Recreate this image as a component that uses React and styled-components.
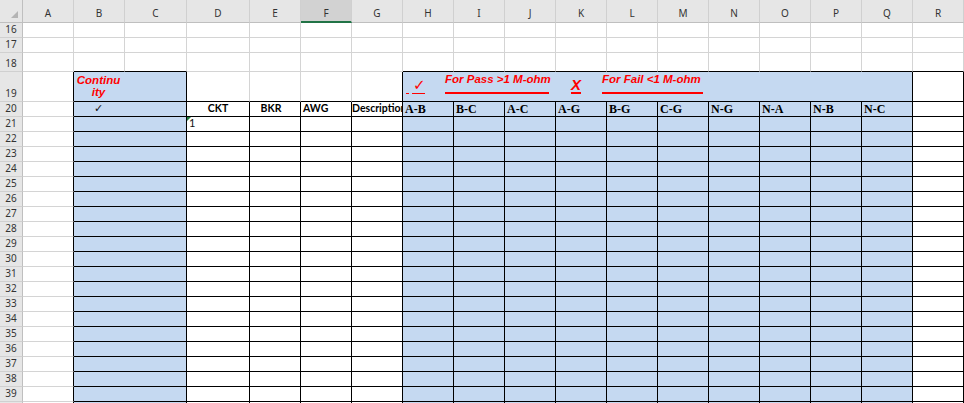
import styled, { createGlobalStyle } from 'styled-components';

const GRID = '#d4d4d4';
const INK = '#000';
const BLUE = '#c5d9f1';
const RED = '#ff0000';
const HEAD_BG = '#e6e6e6';

const COLS = ['A', 'B', 'C', 'D', 'E', 'F', 'G', 'H', 'I', 'J', 'K', 'L', 'M', 'N', 'O', 'P', 'Q', 'R'];
const COL_WIDTHS = [51, 51, 62, 63, 51, 51, 51, 51, 51, 51, 51, 51, 51, 51, 51, 51, 51, 51];
const ROWS = Array.from({ length: 25 }, (_, i) => i + 16);
const LAST_VISIBLE_ROW = 39;
const ROW_HEIGHTS = { 18: 19, 19: 30 };
const PAIRS = ['A-B', 'B-C', 'A-C', 'A-G', 'B-G', 'C-G', 'N-G', 'N-A', 'N-B', 'N-C'];
const ACTIVE_COL = 'F';

const GlobalStyle = createGlobalStyle`
  html, body {
    margin: 0;
    padding: 0;
    background: #fff;
    overflow: hidden;
  }
  * { box-sizing: border-box; }
`;

function isBoxed(row, col) {
  if (row < 19 || col > 17) return false;
  if (col >= 3 && col <= 6) return row >= 20;
  return col >= 1;
}

function isBlue(row, col) {
  return row >= 19 && ((col >= 1 && col <= 2) || (col >= 7 && col <= 16));
}

function rowCells(row) {
  const cells = [];
  let col = 0;
  while (col < COLS.length) {
    let span = 1;
    if (row >= 19 && col === 1) span = 2;
    if (row === 19 && col === 7) span = 10;
    cells.push({ col, span });
    col += span;
  }
  return cells;
}

function cellContent(row, col) {
  if (row === 19 && col === 1) return <Continuity>Continuity</Continuity>;
  if (row === 19 && col === 7) return <LegendRow />;
  if (row === 20) {
    if (col === 1) return <Tick>✓</Tick>;
    if (col === 3) return <HeadLabel $justify="center">CKT</HeadLabel>;
    if (col === 4) return <HeadLabel $justify="center" $pr={8}>BKR</HeadLabel>;
    if (col === 5) return <HeadLabel $pl={2}>AWG</HeadLabel>;
    if (col === 6) return <HeadLabel $justify="center">Description</HeadLabel>;
    if (col >= 7 && col <= 16) return <PairLabel>{PAIRS[col - 7]}</PairLabel>;
  }
  if (row === 21 && col === 3) {
    return (
      <>
        <ErrorMark />
        <NumberText>1</NumberText>
      </>
    );
  }
  return null;
}

function LegendRow() {
  return (
    <Legend>
      <Dash />
      <CheckUnder>✓</CheckUnder>
      <LegendNote $ml={20} $w={104}>For Pass &gt;1 M-ohm</LegendNote>
      <FailMark>X</FailMark>
      <LegendNote $ml={21} $w={101}>For Fail &lt;1 M-ohm</LegendNote>
    </Legend>
  );
}

export default function App() {
  return (
    <>
      <GlobalStyle />
      <Sheet>
        <Corner><CornerArrow /></Corner>
        {COLS.map((c) => (
          <ColHead key={c} $active={c === ACTIVE_COL}>{c}</ColHead>
        ))}
        {ROWS.map((row) => (
          <Row key={row} row={row} />
        ))}
      </Sheet>
    </>
  );
}

function Row({ row }) {
  return (
    <>
      <RowHead>{row <= LAST_VISIBLE_ROW ? row : ''}</RowHead>
      {rowCells(row).map(({ col, span }) => {
        const boxed = isBoxed(row, col);
        const right = boxed || isBoxed(row, col + span) ? INK : GRID;
        const bottom = boxed || isBoxed(row + 1, col) ? INK : GRID;
        return (
          <Cell
            key={col}
            $span={span}
            $blue={isBlue(row, col)}
            $right={right}
            $bottom={bottom}
            $top={row === 19 && col === 1}
          >
            {cellContent(row, col)}
          </Cell>
        );
      })}
    </>
  );
}

const Sheet = styled.div`
  display: grid;
  grid-template-columns: 23px ${COL_WIDTHS.map((w) => `${w}px`).join(' ')};
  grid-template-rows: 23px ${ROWS.map((r) => `${ROW_HEIGHTS[r] || 15}px`).join(' ')};
  width: 964px;
  height: 403px;
  overflow: hidden;
  background: #fff;
`;

const Corner = styled.div`
  display: flex;
  align-items: flex-end;
  justify-content: flex-end;
  padding: 0 4px 4px 0;
  background: ${HEAD_BG};
  border-right: 1px solid #bfbfbf;
  border-bottom: 1px solid #bfbfbf;
`;

const CornerArrow = styled.div`
  width: 0;
  height: 0;
  border-left: 7px solid transparent;
  border-bottom: 7px solid #b4b4b4;
`;

const ColHead = styled.div`
  display: flex;
  align-items: flex-end;
  justify-content: center;
  padding-bottom: ${(p) => (p.$active ? 2 : 3)}px;
  background: ${(p) => (p.$active ? '#d2d2d2' : HEAD_BG)};
  border-right: 1px solid #d0d0d0;
  border-bottom: ${(p) => (p.$active ? '2px solid #217346' : '1px solid #bfbfbf')};
  font: 10px/12px 'Noto Sans', 'DejaVu Sans', sans-serif;
  color: #333;
`;

const RowHead = styled.div`
  display: flex;
  align-items: flex-end;
  justify-content: center;
  padding-bottom: 2px;
  background: ${HEAD_BG};
  border-right: 1px solid #bfbfbf;
  border-bottom: 1px solid #d0d0d0;
  font: 10px/12px 'Noto Sans', 'DejaVu Sans', sans-serif;
  color: #333;
  overflow: hidden;
`;

const Cell = styled.div`
  grid-column: span ${(p) => p.$span};
  position: relative;
  display: flex;
  align-items: ${(p) => (p.$top ? 'flex-start' : 'flex-end')};
  min-width: 0;
  overflow: hidden;
  background: ${(p) => (p.$blue ? BLUE : '#fff')};
  border-right: 1px solid ${(p) => p.$right};
  border-bottom: 1px solid ${(p) => p.$bottom};
`;

const Continuity = styled.div`
  width: 45px;
  margin: 2px 0 0 2px;
  text-align: center;
  word-break: break-all;
  font: italic bold 11.5px/12px 'Liberation Sans', Arial, sans-serif;
  color: ${RED};
`;

const Tick = styled.div`
  width: 49px;
  text-align: center;
  padding-bottom: 1px;
  font: 11px/12px 'DejaVu Sans', sans-serif;
  color: #111;
`;

const HeadLabel = styled.div`
  flex: 1;
  display: flex;
  justify-content: ${(p) => p.$justify || 'flex-start'};
  padding: 0 ${(p) => p.$pr || 0}px 2px ${(p) => p.$pl || 0}px;
  white-space: nowrap;
  font: bold 10.5px/12px Lato, 'Liberation Sans', sans-serif;
  color: #000;
`;

const PairLabel = styled.div`
  padding: 0 0 1px 2px;
  white-space: nowrap;
  font: bold 12px/12px 'Liberation Serif', 'Times New Roman', serif;
  color: #000;
`;

const NumberText = styled.div`
  padding: 0 0 2px 2px;
  font: 11px/12px Lato, 'Liberation Sans', sans-serif;
  color: #111;
`;

const ErrorMark = styled.div`
  position: absolute;
  top: 0;
  left: 0;
  width: 0;
  height: 0;
  border-top: 4px solid #1e7b3a;
  border-right: 4px solid transparent;
`;

const Legend = styled.div`
  display: flex;
  align-items: flex-end;
  height: 100%;
  padding: 0 0 7px 3px;
  color: ${RED};
`;

const Dash = styled.div`
  width: 3px;
  border-bottom: 1px solid ${RED};
  margin-right: 3px;
`;

const CheckUnder = styled.div`
  width: 13px;
  border-bottom: 1px solid ${RED};
  white-space: nowrap;
  font: italic 15px/15px 'DejaVu Sans', sans-serif;
  padding-left: 1px;
`;

const LegendNote = styled.div`
  width: ${(p) => p.$w}px;
  margin-left: ${(p) => p.$ml}px;
  padding-bottom: 6px;
  border-bottom: 2px solid ${RED};
  white-space: nowrap;
  font: italic bold 11.5px/13px 'Liberation Sans', Arial, sans-serif;
`;

const FailMark = styled.div`
  width: 10px;
  margin-left: 22px;
  border-bottom: 2px solid ${RED};
  text-align: center;
  font: italic bold 15px/15px 'Liberation Sans', Arial, sans-serif;
`;
